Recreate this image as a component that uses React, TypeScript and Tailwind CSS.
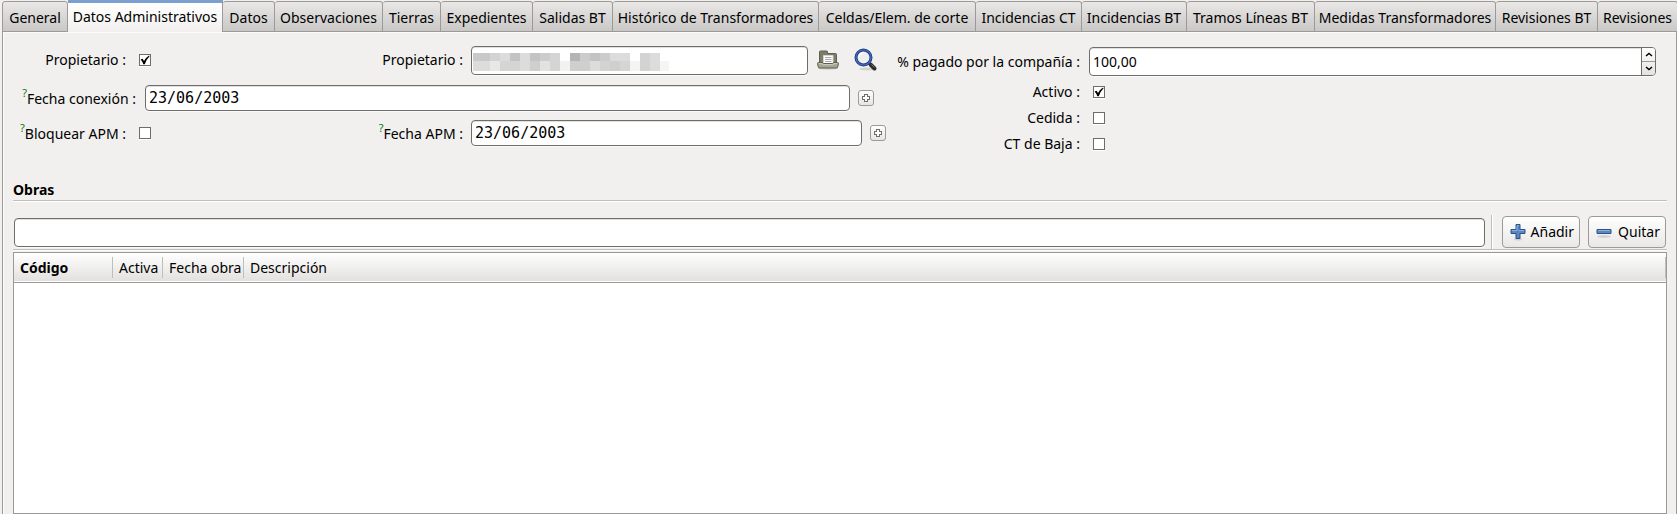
import React, { useState } from 'react';

const tabs = [
  { label: 'General', width: 'w-[66px]' },
  { label: 'Datos Administrativos', width: 'w-[155px]' },
  { label: 'Datos', width: 'w-[52px]' },
  { label: 'Observaciones', width: 'w-[108px]' },
  { label: 'Tierras', width: 'w-[58px]' },
  { label: 'Expedientes', width: 'w-[92px]' },
  { label: 'Salidas BT', width: 'w-[80px]' },
  { label: 'Histórico de Transformadores', width: 'w-[206px]' },
  { label: 'Celdas/Elem. de corte', width: 'w-[157px]' },
  { label: 'Incidencias CT', width: 'w-[106px]' },
  { label: 'Incidencias BT', width: 'w-[105px]' },
  { label: 'Tramos Líneas BT', width: 'w-[128px]' },
  { label: 'Medidas Transformadores', width: 'w-[181px]' },
  { label: 'Revisiones BT', width: 'w-[102px]' },
  { label: 'Revisiones', width: 'w-[80px]' },
];

const field =
  'min-w-0 rounded-[4px] border border-[#6f6d6a] bg-white px-[3px] text-black shadow-[inset_0_1px_0_#e2e0de,0_1px_0_#fbfbfb] outline-none';

function TabBar() {
  const [active, setActive] = useState(1);
  return (
    <div role="tablist" className="relative z-10 flex h-8 items-end overflow-hidden pl-[2px]">
      {tabs.map((tab, i) => (
        <button
          key={tab.label}
          type="button"
          role="tab"
          aria-selected={i === active}
          onClick={() => setActive(i)}
          className={
            i === active
              ? `${tab.width} flex h-8 shrink-0 items-center justify-center whitespace-nowrap border-t-[3px] border-r border-t-[#7b9fcf] border-r-[#9c9a97] bg-linear-to-b from-white to-[#f1f0ee] pb-px`
              : `${tab.width} flex h-[31px] shrink-0 items-center justify-center whitespace-nowrap rounded-t-[3px] border-t border-r border-b border-[#9c9a97] bg-linear-to-b from-[#e9e8e6] to-[#c9c8c6] pt-[3px] first:border-l`
          }
        >
          {tab.label}
        </button>
      ))}
    </div>
  );
}

function Check({ id, checked = false }: { id: string; checked?: boolean }) {
  return (
    <span className="grid size-3 shrink-0">
      <input
        id={id}
        type="checkbox"
        defaultChecked={checked}
        className="peer col-start-1 row-start-1 size-3 appearance-none border border-[#6f6d6a] bg-white shadow-[0_1px_0_#fff]"
      />
      <svg viewBox="0 0 12 12" className="pointer-events-none invisible col-start-1 row-start-1 size-3 peer-checked:visible" aria-hidden="true">
        <path d="M1.600 5.600 L3.600 4.700 L5 7 Q7 3.200 10 1.400 L10.600 2.200 Q7.600 5 5.800 10.200 L4.300 10.200 Q3.400 7.600 1.600 5.600Z" fill="#000" />
      </svg>
    </span>
  );
}

function Label({ htmlFor, help, className, children }: { htmlFor: string; help?: boolean; className: string; children: React.ReactNode }) {
  return (
    <label htmlFor={htmlFor} className={`flex shrink-0 justify-end whitespace-nowrap ${className}`}>
      {help && <span className="-mt-[2px] text-[11px] leading-3 text-[#0c7a0c]">?</span>}
      <span>{children} :</span>
    </label>
  );
}

function CalendarButton({ label }: { label: string }) {
  return (
    <button type="button" aria-label={label} className="ml-2 flex size-4 shrink-0 items-center justify-center rounded-[3px] border border-[#9c9a97] bg-linear-to-b from-white to-[#e6e5e3]">
      <svg viewBox="0 0 10 10" className="size-[10px] shrink-0" shapeRendering="crispEdges" aria-hidden="true">
        <path d="M3.5 1.5h3v2h2v3h-2v2h-3v-2h-2v-3h2z" fill="#fff" stroke="#6f6d6a" />
      </svg>
    </button>
  );
}

const mosaicTop: [number, number, string][] = [
  [0, 17, '#c9c9c9'], [17, 10, '#d3d3d3'], [27, 10, '#dcdcdc'], [37, 10, '#c3c3c3'], [47, 10, '#dcdcdc'],
  [57, 10, '#c3c3c3'], [67, 10, '#cccccc'], [77, 10, '#d5d5d5'], [97, 10, '#b4b4b4'], [107, 10, '#cccccc'],
  [117, 10, '#c3c3c3'], [127, 10, '#cccccc'], [137, 20, '#dcdcdc'], [167, 10, '#d3d3d3'], [177, 10, '#dcdcdc'],
];
const mosaicBottom: [number, number, string][] = [
  [0, 17, '#dcdcdc'], [17, 10, '#e8e8e8'], [27, 20, '#d5d5d5'], [47, 10, '#dcdcdc'], [57, 10, '#cfcfcf'],
  [67, 10, '#e2e2e2'], [77, 10, '#d5d5d5'], [87, 10, '#f2f2f2'], [97, 20, '#cfcfcf'], [117, 10, '#dcdcdc'],
  [127, 10, '#d3d3d3'], [137, 10, '#cfcfcf'], [147, 10, '#d5d5d5'], [157, 10, '#f4f4f4'], [167, 10, '#d3d3d3'],
  [177, 10, '#dcdcdc'], [187, 9, '#f5f5f5'],
];

function Redacted() {
  return (
    <svg viewBox="0 0 196 18" className="pointer-events-none absolute top-[7px] left-[2px] h-[18px] w-[196px]" shapeRendering="crispEdges" aria-hidden="true">
      {mosaicTop.map(([x, w, c]) => <rect key={x} x={x} y={0} width={w} height={8} fill={c} />)}
      {mosaicBottom.map(([x, w, c]) => <rect key={x} x={x} y={8} width={w} height={10} fill={c} />)}
    </svg>
  );
}

function FolderIcon() {
  return (
    <svg viewBox="0 0 22 20" className="h-5 w-[22px]" aria-hidden="true">
      <ellipse cx="11" cy="18.5" rx="10" ry="1.2" fill="#000" opacity=".15" />
      <path d="M2.5 14V2q0-1 1-1h6q1 0 1 1v1.500h8q1 0 1 1V14z" fill="#7c7e6a" stroke="#5d5f51" />
      <path d="M6.500 5.500h9.500v8H6.500z" fill="#fff" stroke="#d5d6cf" />
      <path d="M8 7.500h6.500M8 9.500h6.500M8 11.500h6.500" stroke="#a9aaa3" />
      <path d="M.5 13.500q0-1 1-1h3.500l1.500 1h9l1.500-1H20.500q1 0 1 1l-.8 3.500q-.2 1-1.200 1h-17q-1 0-1.200-1z" fill="#a3a592" stroke="#5d5f51" />
      <path d="M2 13.700h3l1.500 1h9l1.500-1h3" stroke="#d0d1c4" fill="none" />
    </svg>
  );
}

function SearchIcon() {
  return (
    <svg viewBox="0 0 24 24" className="size-6" aria-hidden="true">
      <ellipse cx="13" cy="21" rx="8" ry="1.500" fill="#000" opacity=".12" />
      <path d="M14.500 14.500l2 2" stroke="#888" strokeWidth="3" />
      <path d="M16.500 16.500l4 4" stroke="#2c2c2c" strokeWidth="4" strokeLinecap="round" />
      <path d="M17.500 16.500l3 3" stroke="#777" />
      <circle cx="9.500" cy="9.500" r="7.500" fill="#eeeef2" stroke="#1e3a80" strokeWidth="3" />
      <circle cx="9.500" cy="9.500" r="7.500" fill="none" stroke="#4a6fc0" strokeWidth="1.200" />
      <path d="M5 9q.5-4 4.500-4.500" stroke="#fff" strokeWidth="1.500" fill="none" />
    </svg>
  );
}

function ToolButton({ icon, children }: { icon: 'plus' | 'minus'; children: React.ReactNode }) {
  return (
    <button type="button" className="flex h-8 w-[78px] shrink-0 items-center justify-between rounded-[4px] border border-[#9c9a97] bg-linear-to-b from-white to-[#e9e8e6] pr-[5px] pl-[7px]">
      <svg viewBox="0 0 16 18" className="h-[18px] w-4" aria-hidden="true">
        <ellipse cx="8" cy={icon === 'plus' ? 16 : 13.5} rx={icon === 'plus' ? 4 : 7} ry="1.5" fill="#000" opacity=".12" />
        <path
          d={icon === 'plus' ? 'M6 1.500h4V6.500h5v4h-5v5H6v-5H1v-4h5z' : 'M1 6.500h14v4H1z'}
          fill="#5b86be"
          stroke="#29528e"
          strokeLinejoin="round"
        />
        <path d={icon === 'plus' ? 'M7 2.500h2M2 7.500h5V3M9 7.500h5' : 'M2 7.500h12'} stroke="#8fb0da" fill="none" />
      </svg>
      {children}
    </button>
  );
}

function AdminForm() {
  return (
    <div className="grid grid-cols-[873fr_781fr]">
      <div className="flex flex-col pt-[13px]">
        <div className="flex h-[30px] items-center">
          <Label htmlFor="is-owner" className="w-[113px]">Propietario</Label>
          <span className="ml-[13px] flex"><Check id="is-owner" checked /></span>
          <Label htmlFor="owner" className="ml-auto">Propietario</Label>
          <div className="relative ml-2 w-[337px]">
            <input id="owner" type="text" className={`${field} block h-[29px] w-full`} />
            <Redacted />
          </div>
          <button type="button" aria-label="Abrir propietario" className="ml-[9px]"><FolderIcon /></button>
          <button type="button" aria-label="Buscar propietario" className="mr-2 ml-[15px]"><SearchIcon /></button>
        </div>
        <div className="mt-[10px] flex h-[26px] items-center">
          <Label htmlFor="connection-date" help className="w-[123px] pt-[2px]">Fecha conexión</Label>
          <input id="connection-date" type="text" defaultValue="23/06/2003" className={`${field} ml-[9px] h-[26px] flex-1 font-['DejaVu_Sans_Mono',monospace] text-[15px]`} />
          <CalendarButton label="Elegir fecha de conexión" />
          <span className="w-3" />
        </div>
        <div className="mt-[9px] flex h-[26px] items-center">
          <Label htmlFor="lock-apm" help className="w-[113px] pt-[2px]">Bloquear APM</Label>
          <span className="ml-[13px] flex"><Check id="lock-apm" /></span>
          <Label htmlFor="apm-date" help className="ml-auto pt-[2px]">Fecha APM</Label>
          <input id="apm-date" type="text" defaultValue="23/06/2003" className={`${field} ml-2 h-[26px] w-[391px] font-['DejaVu_Sans_Mono',monospace] text-[15px]`} />
          <CalendarButton label="Elegir fecha APM" />
        </div>
      </div>

      <div className="flex flex-col pt-[15px] pr-[11px]">
        <div className="flex h-[29px] items-center">
          <Label htmlFor="paid" className="w-[194px]">% pagado por la compañía</Label>
          <div className={`${field} ml-[9px] flex h-[29px] flex-1 overflow-hidden pr-0`}>
            <input id="paid" type="text" inputMode="decimal" defaultValue="100,00" className="min-w-0 flex-1 bg-transparent outline-none" />
            <div className="flex w-[14px] flex-col divide-y divide-[#9c9a97] border-l border-[#6f6d6a] bg-linear-to-b from-white to-[#e3e2e0]">
              <button type="button" aria-label="Aumentar" className="flex flex-1 items-center justify-center">
                <svg viewBox="0 0 8 5" className="h-[5px] w-2"><path d="M1 4l3-2.500L7 4" fill="none" stroke="#000" strokeWidth="1.500" /></svg>
              </button>
              <button type="button" aria-label="Disminuir" className="flex flex-1 items-center justify-center">
                <svg viewBox="0 0 8 5" className="h-[5px] w-2"><path d="M1 1l3 2.500L7 1" fill="none" stroke="#000" strokeWidth="1.500" /></svg>
              </button>
            </div>
          </div>
        </div>
        <div className="mt-[3px] flex flex-col">
          {[
            { id: 'active', label: 'Activo', checked: true },
            { id: 'transferred', label: 'Cedida', checked: false },
            { id: 'retired', label: 'CT de Baja', checked: false },
          ].map((row) => (
            <div key={row.id} className="flex h-[26px] items-center">
              <Label htmlFor={row.id} className="w-[194px]">{row.label}</Label>
              <span className="ml-[13px] flex"><Check id={row.id} checked={row.checked} /></span>
            </div>
          ))}
        </div>
      </div>
    </div>
  );
}

export default function App() {
  return (
    <div className="flex min-h-screen flex-col overflow-hidden bg-[#f1f0ee] font-['Noto_Sans',sans-serif] text-[14px] leading-5 text-black">
      <TabBar />
      <main className="-mt-px ml-[2px] flex flex-1 flex-col border-x border-t border-[#9c9a97] pr-[9px] pl-[10px] shadow-[inset_1px_1px_0_#fbfbfb]">
        <AdminForm />
        <h2 className="mt-[23px] border-b border-[#bfbebc] text-[14px] font-bold shadow-[0_1px_0_#fff]">Obras</h2>
        <div className="flex items-center pt-[14px]">
          <input type="text" aria-label="Obra" className={`${field} ml-px h-[29px] flex-1`} />
          <span className="mx-[6px] h-[34px] w-[2px] border-l border-[#bfbebc] bg-white" />
          <div className="ml-[3px] flex gap-2 pr-px">
            <ToolButton icon="plus">Añadir</ToolButton>
            <ToolButton icon="minus">Quitar</ToolButton>
          </div>
        </div>
        <hr className="mb-[2px] border-[#bfbebc] shadow-[0_1px_0_#fff]" />
        <div className="flex-1 border border-[#9c9a97] bg-white">
          <table className="w-full table-fixed">
            <thead>
              <tr className="h-[29px] border-b border-[#9c9a97] bg-linear-to-b from-white to-[#e2e1df] text-left">
                {[
                  { label: 'Código', style: 'w-[99px] font-bold' },
                  { label: 'Activa', style: 'w-[50px] font-normal' },
                  { label: 'Fecha obra', style: 'w-[81px] font-normal' },
                  { label: 'Descripción', style: 'font-normal' },
                ].map((col) => (
                  <th key={col.label} scope="col" className={`p-0 ${col.style}`}>
                    <div className="h-[21px] whitespace-nowrap border-r border-[#bfbebc] pl-[6px] leading-[22px]">{col.label}</div>
                  </th>
                ))}
              </tr>
            </thead>
            <tbody />
          </table>
        </div>
      </main>
    </div>
  );
}
